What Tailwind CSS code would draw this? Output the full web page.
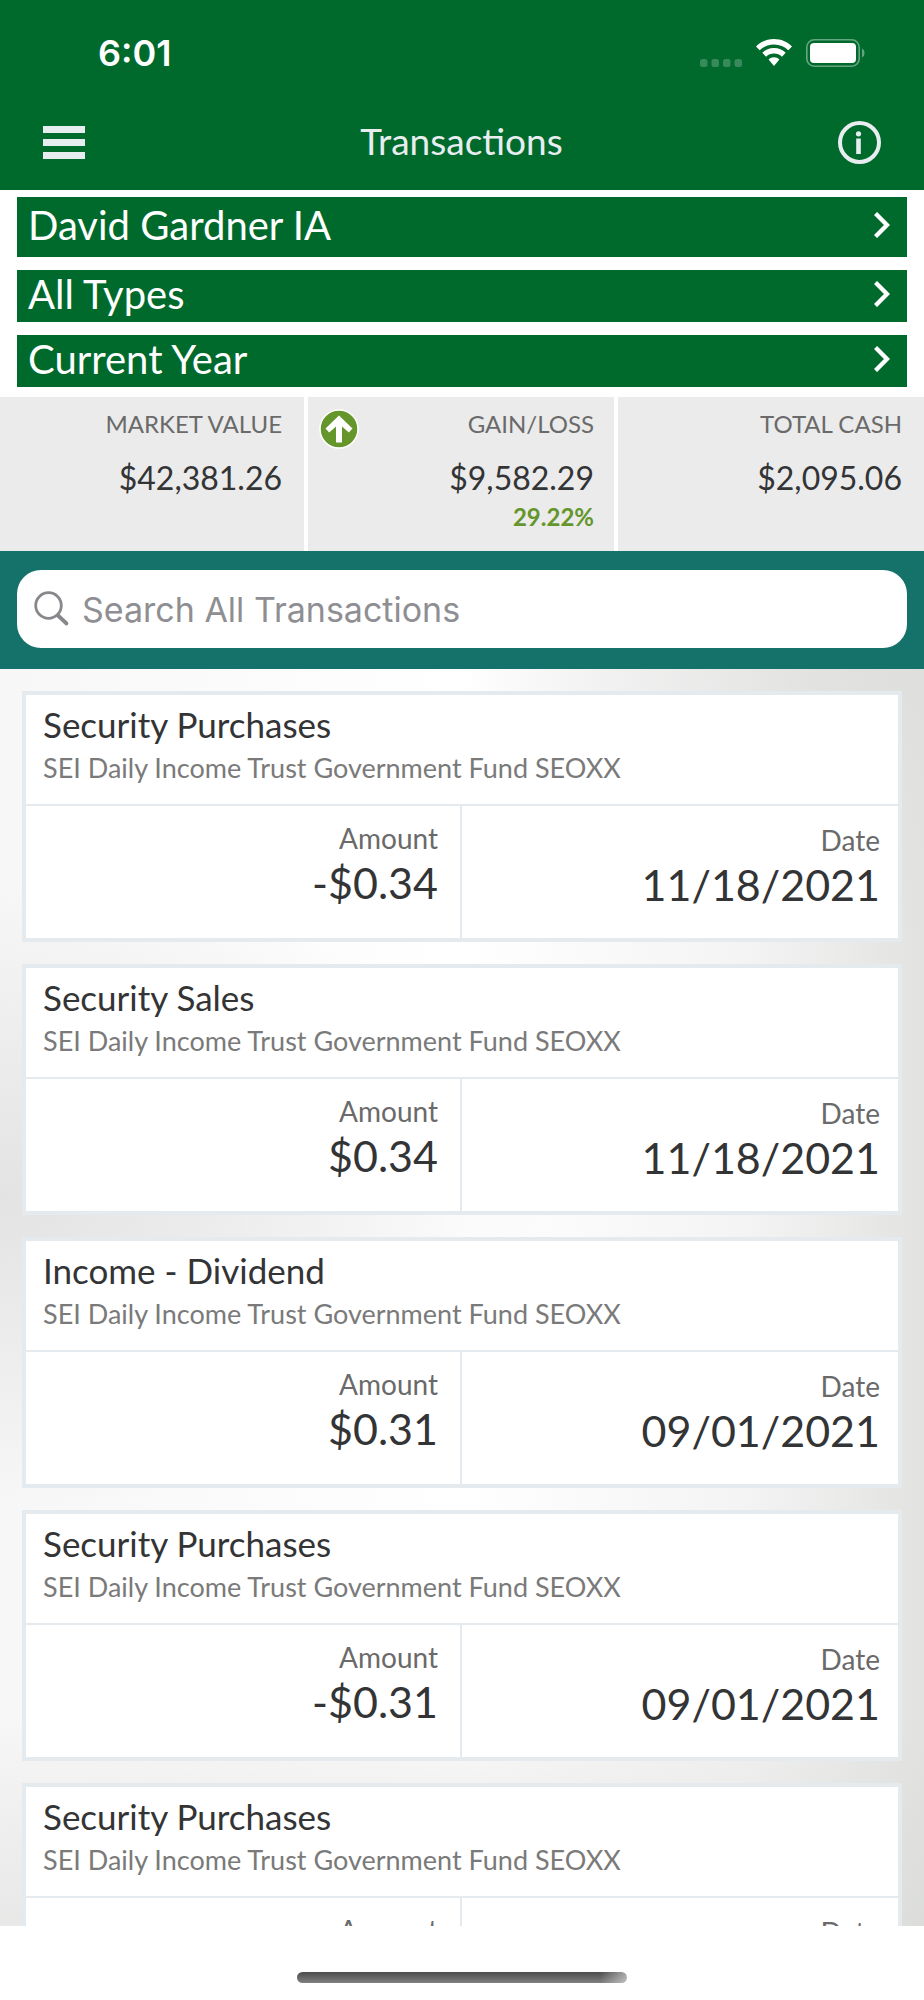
<!DOCTYPE html>
<html lang="en">
<head>
<meta charset="utf-8">
<meta name="viewport" content="width=device-width, initial-scale=1">
<title>Transactions</title>
<script src="https://cdn.jsdelivr.net/npm/@tailwindcss/browser@4"></script>
</head>
<body class="flex h-screen flex-col overflow-hidden bg-white font-['Lato',sans-serif] text-[#333435]">
  <header class="shrink-0 bg-[#006a2d] pb-[10px] text-white">
    <div class="flex h-[104px] items-center justify-between pt-px pr-[59px] pl-[98px]">
      <time class="font-['Inter',sans-serif] text-[36px] leading-none font-semibold">6:01</time>
      <div class="flex items-center">
        <svg class="mt-5 mr-[14px] h-2 w-[42px]" viewBox="0 0 42 8" fill="#fff" fill-opacity=".22" aria-hidden="true"><rect width="7.5" height="8" rx="2.5"/><rect x="11.5" width="7.5" height="8" rx="2.5"/><rect x="23" width="7.5" height="8" rx="2.5"/><rect x="34.5" width="7.5" height="8" rx="2.5"/></svg>
        <svg class="mr-[14px] h-[27px] w-9" viewBox="0 0 36 27" fill="#fff" aria-hidden="true"><path d="M18 0C11 0 4.700 2.700 0 7.400L3.700 11.300C7.400 7.700 12.400 5.500 18 5.500S28.600 7.700 32.300 11.300L36 7.400C31.300 2.700 25 0 18 0Z"/><path d="M18 9C13.400 9 9.300 10.900 6.300 13.800L10.100 17.700C12.100 15.700 14.900 14.500 18 14.500S23.900 15.700 25.900 17.700L29.700 13.800C26.700 10.900 22.600 9 18 9Z"/><path d="M18 18.300C15.900 18.300 14 19.100 12.600 20.400L18 27L23.400 20.400C22 19.100 20.100 18.300 18 18.300Z"/></svg>
        <svg class="h-7 w-[59px]" viewBox="0 0 59 28" aria-hidden="true"><rect x=".8" y=".8" width="52.400" height="26.400" rx="7.500" fill="none" stroke="#fff" stroke-opacity=".4" stroke-width="1.600"/><rect x="4" y="4" width="46" height="20" rx="4" fill="#fff"/><path d="M56 9.500c3.300 1.300 3.300 7.700 0 9Z" fill="#fff" fill-opacity=".4"/></svg>
      </div>
    </div>
    <div class="flex h-[76px] items-center justify-between px-[43px] text-[#e8edf0]">
      <button type="button" aria-label="Menu"><svg class="h-[33px] w-[42px]" viewBox="0 0 42 33" fill="currentColor"><path d="M0 0h42v7H0zM0 13h42v7H0zM0 26h42v7H0z"/></svg></button>
      <h1 class="pb-1 text-[37px] leading-none">Transactions</h1>
      <button type="button" aria-label="Information"><svg class="size-[43px]" viewBox="0 0 43 43"><circle cx="21.500" cy="21.500" r="19.500" fill="none" stroke="currentColor" stroke-width="4"/><circle cx="20.500" cy="12.800" r="2.600" fill="currentColor"/><path d="M18.200 17.500h4.600v15.500h-4.600z" fill="currentColor"/></svg></button>
    </div>
  </header>

  <nav class="flex shrink-0 flex-col gap-[13px] px-[17px] pt-[7px] pb-[10px] text-[40px] leading-none text-white" aria-label="Filters">
    <button type="button" class="flex h-[60px] items-center justify-between bg-[#006a2d] pr-[17px] pb-1 pl-[11px]"><span>David Gardner IA</span><svg class="h-[26px] w-4" viewBox="0 0 16 26" fill="none" stroke="#fff" stroke-width="4.400"><path d="M1.500 1.500L13 13L1.500 24.500"/></svg></button>
    <button type="button" class="flex h-[52px] items-center justify-between bg-[#006a2d] pr-[17px] pb-1 pl-[11px]"><span>All Types</span><svg class="h-[26px] w-4" viewBox="0 0 16 26" fill="none" stroke="#fff" stroke-width="4.400"><path d="M1.500 1.500L13 13L1.500 24.500"/></svg></button>
    <button type="button" class="flex h-[52px] items-center justify-between bg-[#006a2d] pr-[17px] pb-1 pl-[11px]"><span>Current Year</span><svg class="h-[26px] w-4" viewBox="0 0 16 26" fill="none" stroke="#fff" stroke-width="4.400"><path d="M1.500 1.500L13 13L1.500 24.500"/></svg></button>
  </nav>

  <dl class="grid shrink-0 grid-cols-[304fr_306fr_306fr] gap-1 text-right">
    <div class="h-[154px] bg-[#ebebeb] pt-3 pr-[22px]">
      <dt class="text-[24px] leading-[30px] text-[#6a6a6a]">MARKET VALUE</dt>
      <dd class="mt-[19px] text-[32px] leading-[40px]">$42,381.26</dd>
    </div>
    <div class="relative h-[154px] bg-[#ebebeb] pt-3 pr-[20px]">
      <svg class="absolute top-3 left-[11px] size-10" viewBox="0 0 40 40" role="img" aria-label="Up"><circle cx="20" cy="20" r="19" fill="#64962c" stroke="#fff" stroke-width="1.500"/><path d="M20 6.500L33.500 19.500L29.800 23.500L23 17.500V33.500H17V17.500L10.200 23.500L6.500 19.500Z" fill="#fff"/></svg>
      <dt class="text-[24px] leading-[30px] text-[#6a6a6a]">GAIN/LOSS</dt>
      <dd class="mt-[19px] text-[32px] leading-[40px]">$9,582.29</dd>
      <dd class="text-[24px] leading-[38px] font-bold text-[#64962c]">29.22%</dd>
    </div>
    <div class="h-[154px] bg-[#ebebeb] pt-3 pr-[22px]">
      <dt class="text-[24px] leading-[30px] text-[#6a6a6a]">TOTAL CASH</dt>
      <dd class="mt-[19px] text-[32px] leading-[40px]">$2,095.06</dd>
    </div>
  </dl>

  <div class="shrink-0 bg-[#15726a] px-[17px] pt-[19px] pb-[21px]">
    <label class="flex h-[78px] items-center gap-3 rounded-[24px] bg-white px-[17px]">
      <svg class="size-9 shrink-0" viewBox="0 0 36 36" fill="none" stroke="#88888c" aria-hidden="true"><circle cx="14.500" cy="14.500" r="12.800" stroke-width="2.800"/><path d="M24 24.500L32.500 32.500" stroke-width="3.800" stroke-linecap="round"/></svg>
      <input type="search" aria-label="Search All Transactions" placeholder="Search All Transactions" class="min-w-0 flex-1 bg-transparent font-['Inter',sans-serif] text-[34px] outline-none placeholder:text-[#8e8e93]">
    </label>
  </div>

  <main class="min-h-0 flex-1 overflow-hidden bg-[radial-gradient(ellipse_60%_25%_at_0%_42%,#e3e3e3,transparent),radial-gradient(ellipse_50%_22%_at_100%_0%,#dfe0de,transparent),radial-gradient(ellipse_110%_30%_at_50%_110%,#d4d6d3,transparent),linear-gradient(to_right,#f7f7f7,#ffffff_50%,#f4f4f4_80%,#e2e3e1)] px-[22px] pt-[22px]">
    <ul id="list" class="flex flex-col gap-[22px]"></ul>
  </main>

  <footer class="flex h-[74px] shrink-0 justify-center bg-white pt-[46px]">
    <div class="h-[11px] w-[330px] rounded-full bg-[linear-gradient(to_right,transparent_92%,#ffffff80),linear-gradient(#4c4c4c,#808080)]"></div>
  </footer>

<script>
const rows = [
  ["Security Purchases", "-$0.34", "11/18/2021"],
  ["Security Sales", "$0.34", "11/18/2021"],
  ["Income - Dividend", "$0.31", "09/01/2021"],
  ["Security Purchases", "-$0.31", "09/01/2021"],
  ["Security Purchases", "-$0.31", "09/01/2021"]
];
document.getElementById("list").innerHTML = rows.map(([title, amount, date]) => `
  <li class="border-4 border-[#e4eaee] bg-white">
    <div class="h-[111px] border-b-2 border-[#e4eaee] px-[17px] pt-2">
      <h2 class="text-[35px] leading-[42px]">${title}</h2>
      <p class="text-[27px] leading-[46px] text-[#7a7a7a]">SEI Daily Income Trust Government Fund SEOXX</p>
    </div>
    <dl class="grid h-[132px] grid-cols-2 text-right">
      <div class="border-r-2 border-[#e4eaee] pt-3 pr-[22px]">
        <dt class="text-[28px] leading-[40px] text-[#6a6a6a]">Amount</dt>
        <dd class="text-[43px] leading-[50px]">${amount}</dd>
      </div>
      <div class="pt-[14px] pr-[18px]">
        <dt class="text-[28px] leading-[40px] text-[#6a6a6a]">Date</dt>
        <dd class="text-[43px] leading-[50px]">${date}</dd>
      </div>
    </dl>
  </li>`).join("");
</script>
</body>
</html>
